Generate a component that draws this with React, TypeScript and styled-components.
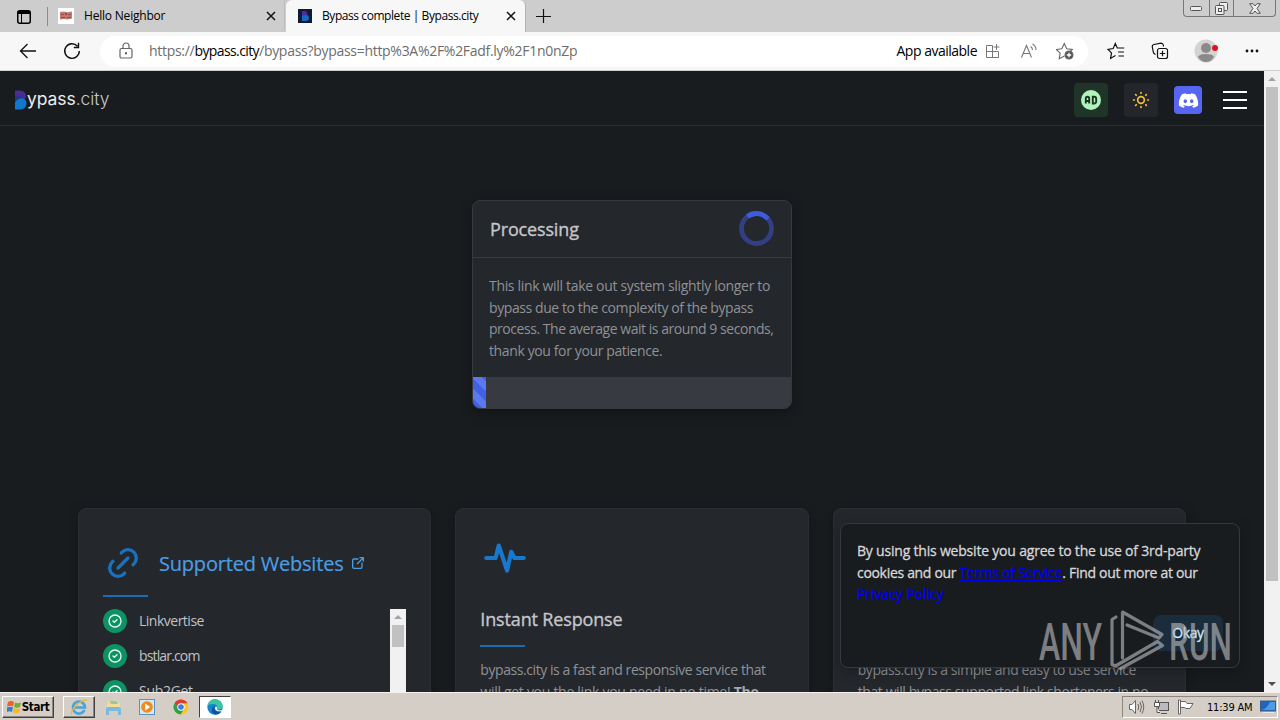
import React from "react";
import styled, { createGlobalStyle } from "styled-components";
import { FaDiscord } from "react-icons/fa";

const Global = createGlobalStyle`
  * { box-sizing: border-box; }
  html, body { margin: 0; padding: 0; }
  body {
    width: 1280px; height: 720px; overflow: hidden;
    font-family: "Open Sans", "Noto Sans", sans-serif;
  }
  svg { display: block; flex: none; }
`;

const Screen = styled.div`
  position: relative;
  width: 1280px; height: 720px;
  display: flex; flex-direction: column;
  overflow: hidden;
`;

/* Browser chrome */
const TabStrip = styled.div`
  height: 32px; flex: none;
  display: flex; align-items: stretch;
  background: #cdcdcd;
  padding-left: 17px;
`;
const TabActions = styled.div`
  width: 31px; display: flex; align-items: center;
  border-right: 1px solid #8c8c8c;
  margin: 7px 0 6px;
`;
const Tab = styled.div<{ $active?: boolean }>`
  width: ${p => (p.$active ? 240 : 237)}px;
  padding: 0 ${p => (p.$active ? 9 : 8)}px 0 ${p => (p.$active ? 12 : 10)}px;
  margin-left: ${p => (p.$active ? 1 : 0)}px;
  display: flex; align-items: center;
  background: ${p => (p.$active ? "#f7f7f7" : "transparent")};
  border-right: 1px solid ${p => (p.$active ? "#b4b4b4" : "#bdbdbd")};
  border-radius: ${p => (p.$active ? "6px 6px 0 0" : "0 0 5px 0")};
`;
const TabTitle = styled.span<{ $ls: number }>`
  flex: 1; margin-left: 10px;
  font-size: 12px; line-height: 16px; color: #000;
  letter-spacing: ${p => p.$ls}px; white-space: nowrap;
`;
const NewTab = styled.div`
  display: flex; align-items: center; padding-left: 9px; flex: 1;
`;
const WindowControls = styled.div`
  width: 93px; height: 17px; margin-right: 4px;
  display: flex;
  border: 1px solid #777; border-top: 0; border-radius: 0 0 4px 4px;
`;
const WindowButton = styled.div<{ $w: number }>`
  width: ${p => p.$w}px; display: flex; align-items: center; justify-content: center;
  & + & { border-left: 1px solid #777; }
`;
const Toolbar = styled.div`
  height: 39px; flex: none;
  display: flex; align-items: center;
  background: #f7f7f7;
  border-bottom: 1px solid #cfcfcf;
  padding-left: 19px;
`;
const NavIcons = styled.div`
  width: 81px; display: flex; gap: 26px;
`;
const AddressBar = styled.div`
  width: 988px; height: 31px; border-radius: 16px; background: #fff;
  display: flex; align-items: center; padding: 0 14px 0 18px;
`;
const Url = styled.span`
  flex: 1; margin-left: 15px;
  font-size: 14px; line-height: 20px; color: #6d6d6d; letter-spacing: -0.29px; white-space: nowrap;
  b { font-weight: 400; color: #000; letter-spacing: -0.6px; }
`;
const AppAvailable = styled.span`
  font-size: 14px; line-height: 20px; letter-spacing: -0.5px; margin-right: 8px; white-space: nowrap;
`;
const AddressIcons = styled.div`
  display: flex; align-items: center; gap: 18px;
`;
const ToolbarIcons = styled.div`
  display: flex; align-items: center; margin-left: 18px;
  svg:nth-child(2) { margin-left: 25px; }
  svg:nth-child(3) { margin-left: 25px; }
  svg:nth-child(4) { margin-left: 26px; }
`;

/* Page */
const Viewport = styled.div`
  height: 621px; flex: none; display: flex; background: #191c1f;
`;
const Page = styled.div`
  width: 1264px; height: 621px; overflow: hidden;
  display: flex; flex-direction: column; align-items: center;
`;
const Header = styled.header`
  width: 100%; height: 55px; flex: none;
  display: flex; align-items: center; justify-content: space-between;
  padding: 4px 17px 0 14px;
  border-bottom: 1px solid #2b2e33;
`;
const Brand = styled.div`
  display: flex; align-items: center; height: 24px;
`;
const BrandName = styled.span`
  font-family: Inter, sans-serif; font-size: 17.5px; line-height: 22px; color: #eceded;
  letter-spacing: -0.07px; margin: -3px 0 0 0;
  i { font-style: normal; font-weight: 300; color: #c9cacc; }
`;
const HeaderActions = styled.div`
  display: flex; align-items: center;
`;
const IconButton = styled.div<{ $bg: string; $size: number; $ml?: number }>`
  width: ${p => p.$size}px; height: ${p => p.$size}px; margin-left: ${p => p.$ml ?? 0}px;
  display: flex; align-items: center; justify-content: center;
  border-radius: 4px; background: ${p => p.$bg}; color: #fff;
`;
const Burger = styled.div`
  width: 24px; height: 18px; margin-left: 21px;
  display: flex; flex-direction: column; justify-content: space-between;
`;
const BurgerLine = styled.span`
  height: 2px; background: #fff;
`;

const StatusCard = styled.section`
  width: 320px; height: 209px; flex: none; margin: 74px 0 99px;
  display: flex; flex-direction: column;
  background: #24272c; border: 1px solid #35383d; border-radius: 8px; overflow: hidden;
  box-shadow: 0 4px 14px rgba(0, 0, 0, 0.3);
`;
const StatusHead = styled.div`
  height: 57px; display: flex; align-items: center; justify-content: space-between;
  padding: 0 17px 1px 16px; border-bottom: 1px solid #393c41;
`;
const StatusTitle = styled.h2`
  margin: 1px 0 0 1px; font-size: 18px; line-height: 26px; font-weight: 500; color: #c4c6ca; letter-spacing: -0.15px;
  -webkit-text-stroke: 0.35px #c4c6ca;
`;
const StatusBody = styled.div`
  flex: 1; padding: 17px 0 0 16px;
`;
const Line = styled.div<{ $ls?: number }>`
  font-size: 14px; line-height: 21.7px; white-space: nowrap;
  letter-spacing: ${p => p.$ls ?? 0}px;
`;
const Muted = styled.div`
  color: #8f9296;
  b { color: #a6a8ab; }
`;
const Progress = styled.div`
  height: 31px; background: #373a40; flex: none;
`;
const ProgressBar = styled.div`
  width: 13px; height: 31px;
  background: repeating-linear-gradient(45deg, #4260e4 0 7px, #5c78ec 7px 14px);
`;

const Features = styled.div`
  width: 1108px; flex: none; display: grid; grid-template-columns: repeat(3, 1fr); gap: 24px;
`;
const Feature = styled.section<{ $top: number }>`
  height: 300px; padding: ${p => p.$top}px 24px 0;
  background: #24272c; border: 1px solid #2a2d32; border-radius: 8px;
  box-shadow: 0 2px 12px rgba(0, 0, 0, 0.25);
`;
const FeatureLink = styled.div`
  display: flex; align-items: center; color: #4dabf7; height: 44px;
`;
const LinkTitle = styled.span`
  font-size: 20px; line-height: 28px; margin: 2px 6px 0 16px; letter-spacing: -0.2px; color: #4a9ee0; white-space: nowrap;
  -webkit-text-stroke: 0.2px #4a9ee0;
`;
const FeatureTitle = styled.h3`
  margin: 22px 0 0; font-size: 18px; line-height: 28px; font-weight: 500; color: #c4c6ca; letter-spacing: -0.15px;
  -webkit-text-stroke: 0.35px #c4c6ca;
`;
const Underline = styled.div<{ $mt: number; $mb: number }>`
  width: 45px; height: 2px; background: #1c6cb4;
  margin: ${p => p.$mt}px 0 ${p => p.$mb}px;
`;
const SiteBox = styled.div`
  display: flex; justify-content: space-between; width: 303px; height: 180px; overflow: hidden;
`;
const SiteList = styled.div`
  display: flex; flex-direction: column; gap: 11.3px;
`;
const Site = styled.div`
  display: flex; align-items: center; gap: 12px; height: 24px;
`;
const SiteName = styled.span<{ $ls: number }>`
  font-size: 14px; line-height: 20px; padding-bottom: 1px; color: #c1c2c5;
  letter-spacing: ${p => p.$ls}px; white-space: nowrap;
`;
const Check = styled.div`
  width: 24px; height: 24px; border-radius: 12px; background: #0d9264;
  display: flex; align-items: center; justify-content: center;
`;
const ScrollTrack = styled.div`
  width: 16px; background: #f1f1f1; display: flex; flex-direction: column; align-items: center;
  flex: none;
`;
const ScrollButton = styled.div`
  width: 16px; height: 16px; flex: none; display: flex; align-items: center; justify-content: center;
`;
const Thumb = styled.div<{ $h: number }>`
  width: 12px; height: ${p => p.$h}px; background: #c1c1c1;
`;
const Spacer = styled.div` flex: 1; `;

/* Overlays */
const CookieDialog = styled.div`
  position: absolute; left: 840px; top: 523px; width: 400px; height: 145px;
  display: flex; flex-direction: column;
  padding: 16px;
  background: #191c1f; border: 1px solid #35383d; border-radius: 8px;
  color: #d6d7d9; -webkit-text-stroke: 0.3px;
  box-shadow: 0 4px 14px rgba(0, 0, 0, 0.25);
`;
const PolicyLink = styled.span`
  color: #0000ee;
  text-decoration: underline solid #0000ee 1px; text-underline-offset: 2px; text-decoration-skip-ink: none;
`;
const Okay = styled.button`
  align-self: flex-end; width: 70px; height: 36px; margin-top: 10px; padding: 0 0 1px;
  border: 0; border-radius: 8px; background: #1b2c3d; color: #d0ebff;
  font-family: inherit; font-size: 14px; letter-spacing: -0.4px;
`;
const Watermark = styled.svg`
  position: absolute; left: 1036px; top: 606px;
`;

/* Taskbar */
const Taskbar = styled.div`
  height: 28px; flex: none; position: relative;
  display: flex; align-items: center;
  background: #d5cec6; border-top: 1px solid #f5f2ee;
  padding: 1px 2px 0 2px;
`;
const TaskButton = styled.div<{ $kind: "raised" | "flat" | "pressed"; $w: number; $ml: number }>`
  width: ${p => p.$w}px; height: 22px; margin-left: ${p => p.$ml}px;
  display: flex; align-items: center; justify-content: center; gap: 1px;
  font: bold 11.5px "DejaVu Sans Condensed", "DejaVu Sans", sans-serif; letter-spacing: -0.4px; color: #000;
  background: ${p => (p.$kind === "pressed" ? "#fff" : "transparent")};
  border: ${p => (p.$kind === "flat" ? "0" : "1px solid")};
  border-color: ${p => (p.$kind === "raised" ? "#fff #404040 #404040 #fff" : "#404040 #fff #fff #404040")};
  box-shadow: ${p => (p.$kind === "raised" ? "inset -1px -1px 0 #8a8680" : "none")};
`;
const Tray = styled.div`
  width: 156px; height: 22px; display: flex; align-items: center;
  border: 1px solid; border-color: #8a8680 #fff #fff #8a8680;
  padding-left: 5px; margin-left: auto;
`;
const Volume = styled.svg``;
const Network = styled.svg` margin-left: 8px; `;
const Flag = styled.svg` margin-left: 7px; `;
const Clock = styled.span`
  width: 46px; margin: 0 7px 0 13px; font: 11px "DejaVu Sans Condensed", "DejaVu Sans", sans-serif; letter-spacing: -0.2px; white-space: nowrap;
`;

type StrokeProps = { size: number; color: string; sw?: number; children: React.ReactNode };
const Stroke = ({ size, color, sw = 2, children }: StrokeProps) => (
  <svg width={size} height={size} viewBox="0 0 24 24" fill="none" stroke={color} strokeWidth={sw} strokeLinecap="round" strokeLinejoin="round">
    {children}
  </svg>
);

const Arrow = ({ up, color }: { up?: boolean; color: string }) => (
  <svg width="8" height="4" viewBox="0 0 8 4"><path d={up ? "M0 4L4 0L8 4z" : "M0 0L4 4L8 0z"} fill={color} /></svg>
);

const CloseX = () => (
  <svg width="10" height="10" viewBox="0 0 10 10"><path d="M1 1l8 8M9 1l-8 8" stroke="#111" strokeWidth="1.5" /></svg>
);

const BrandMark = () => (
  <svg width="13" height="20" viewBox="0 0 13 20">
    <path d="M1 .5h5.500q5 .5 5.500 5.500 0 2-1 3L1 7.500z" fill="#4a2c93" />
    <path d="M1 5.500l8 1.500 2 2.500L1 15z" fill="#26348c" />
    <path d="M1 12.500Q4 8.300 8.500 8.300q4 1.200 4 5.200-.5 5.500-6 6H1z" fill="#0f78cf" />
  </svg>
);

const sites: [string, number][] = [["Linkvertise", -0.5], ["bstlar.com", -0.85], ["Sub2Get", -0.3], ["Sub2Unlock", -0.3]];

const BrowserTabs = () => (
  <TabStrip>
    <TabActions>
      <svg width="14" height="14" viewBox="0 0 14 14" fill="none" stroke="#000">
        <rect x=".75" y=".75" width="12.5" height="12.5" rx="2" strokeWidth="1.5" />
        <path d="M1 2.5h12" strokeWidth="3" /><path d="M4.5 3v10" />
      </svg>
    </TabActions>
    <Tab>
      <svg width="16" height="16" viewBox="0 0 16 16">
        <rect width="16" height="16" fill="#fff" />
        <path d="M2 4l4-.5 3 .8 5-.7v7l-5 1-3-.6-4 .5z" fill="#c07a70" />
        <path d="M3 6h3v1H3zM7 5h2v2H7zM10 6h3v1h-3zM3 9h4v1H3zM9 9h4v1H9z" fill="#8f4b48" />
      </svg>
      <TabTitle $ls={-0.2}>Hello Neighbor</TabTitle>
      <CloseX />
    </Tab>
    <Tab $active>
      <svg width="14" height="14" viewBox="0 0 14 14">
        <rect width="14" height="14" fill="#101a33" />
        <path d="M4 2h3a3 3 0 0 1 2 4.500L4 7z" fill="#4d2f9c" />
        <path d="M4 6.500L8 6a3 3 0 0 1 0 6H4z" fill="#1767c4" />
      </svg>
      <TabTitle $ls={-0.43}>Bypass complete | Bypass.city</TabTitle>
      <CloseX />
    </Tab>
    <NewTab>
      <svg width="16" height="16" viewBox="0 0 16 16"><path d="M8.500 1v14M1 8.500h15" stroke="#111" strokeWidth="1.2" /></svg>
    </NewTab>
    <WindowControls>
      <WindowButton $w={25}>
        <svg width="12" height="5" viewBox="0 0 12 5"><rect x=".5" y=".5" width="11" height="4" rx="1" fill="#eee" stroke="#555" /></svg>
      </WindowButton>
      <WindowButton $w={25}>
        <svg width="13" height="13" viewBox="0 0 13 13" fill="#eee" stroke="#555">
          <rect x="4.500" y=".5" width="8" height="8" rx="1" /><rect x=".5" y="3.500" width="8.500" height="9" rx="1" /><rect x="3.500" y="6.500" width="3" height="3" />
        </svg>
      </WindowButton>
      <WindowButton $w={42}>
        <svg width="12" height="11" viewBox="0 0 12 11">
          <path d="M.7 .7h3.300L6 3l2-2.300h3.300L8 5.500l3.300 4.800H8L6 8l-2 2.300H.7L4 5.500z" fill="#eee" stroke="#555" />
        </svg>
      </WindowButton>
    </WindowControls>
  </TabStrip>
);

const BrowserToolbar = () => (
  <Toolbar>
    <NavIcons>
      <svg width="18" height="18" viewBox="0 0 18 18" fill="none" stroke="#111" strokeWidth="1.3"><path d="M17 9H1.500M8.500 2l-7 7 7 7" /></svg>
      <svg width="18" height="18" viewBox="0 0 18 18" fill="none" stroke="#111" strokeWidth="1.400"><path d="M16.300 9A7.300 7.300 0 1 1 14.500 4.200M15.500 .8v4.700h-4.700" /></svg>
    </NavIcons>
    <AddressBar>
      <svg width="16" height="18" viewBox="0 0 16 18" fill="none" stroke="#666" strokeWidth="1.200">
        <rect x="2" y="6.500" width="12" height="9.500" rx="1.500" /><path d="M5 6.500V4a3 3 0 0 1 6 0v2.500" /><circle cx="8" cy="11.300" r=".6" fill="#666" />
      </svg>
      <Url>https://<b>bypass.city</b>/bypass?bypass=http%3A%2F%2Fadf.ly%2F1n0nZp</Url>
      <AppAvailable>App available</AppAvailable>
      <AddressIcons>
        <svg width="16" height="16" viewBox="0 0 16 16" fill="none" stroke="#777">
          <path d="M7.500 2.500h-6v12h12v-5M1.500 8.500h12v6M7.500 2.500v12M11.500 1v6M8.500 4h6" />
        </svg>
        <svg width="19" height="16" viewBox="-1 0 19 16" fill="none" stroke="#777" strokeWidth="1.100">
          <path d="M1.500 14.500L6.500 2.500l5 12M3.200 10.500h6.600M10.500 3.500q2 1 2 3.500M12.500 1q3.500 2 3.500 6" />
        </svg>
        <svg width="18" height="18" viewBox="1 0 18 18" fill="none" stroke="#666" strokeWidth="1.100">
          <path d="M9.500 14l-5.300 2.700 1-5.500L1.300 7.500l5.500-.8L9.300 1.500l2.400 5.200 5.600.8-2 2" />
          <circle cx="14" cy="13" r="4" fill="#555" /><path d="M14 10.800v4.400M11.800 13h4.400" stroke="#fff" strokeWidth="1.300" />
        </svg>
      </AddressIcons>
    </AddressBar>
    <ToolbarIcons>
      <svg width="20" height="18" viewBox="0 0 20 18" fill="none" stroke="#111" strokeWidth="1.200">
        <path d="M9.500 13.500l-4.900 2.900.9-5.500L2 7.300l5.200-.8L9.300 1.500l2 4.500h7M12 10h6M12.500 14h5.500" />
      </svg>
      <svg width="18" height="18" viewBox="0 0 18 18" fill="none" stroke="#111" strokeWidth="1.200">
        <rect x="6.500" y="6.500" width="10" height="10" rx="2" /><path d="M11.500 8.800v5.400M8.800 11.500h5.400" />
        <path d="M4.500 12.500L2.500 11 1.300 4.800Q1 3 3 2.500l7-1.300q2 0 2.300 2l.2 1.300" />
      </svg>
      <svg width="24" height="24" viewBox="0 0 24 24">
        <circle cx="12" cy="12" r="11.500" fill="#d5d3d1" /><circle cx="12" cy="9" r="5" fill="#8b8989" />
        <path d="M4 18q1-3 8-3t8 3q-3 5-8 5t-8-5z" fill="#8b8989" /><circle cx="21" cy="9" r="3" fill="#e01020" />
      </svg>
      <svg width="16" height="16" viewBox="0 0 16 16" fill="#111"><circle cx="3" cy="8" r="1.400" /><circle cx="8" cy="8" r="1.400" /><circle cx="13" cy="8" r="1.400" /></svg>
    </ToolbarIcons>
  </Toolbar>
);

const SiteHeader = () => (
  <Header>
    <Brand>
      <BrandMark />
      <BrandName>ypass<i>.city</i></BrandName>
    </Brand>
    <HeaderActions>
      <IconButton $bg="#1f3527" $size={34}>
        <svg width="24" height="24" viewBox="0 0 24 24">
          <circle cx="12" cy="12" r="10" fill="#b2f2bb" />
          <path d="M6.800 15.500v-5a1.700 1.700 0 0 1 3.400 0v5M6.800 13h3.400M13.800 8.800v6.700h1.400a2 2 0 0 0 2-2v-2.700a2 2 0 0 0-2-2z" fill="none" stroke="#1b3524" strokeWidth="1.900" />
        </svg>
      </IconButton>
      <IconButton $bg="#25262b" $size={34} $ml={16}>
        <Stroke size={20} color="#f2c23c">
          <path d="M12 12m-4 0a4 4 0 1 0 8 0a4 4 0 1 0 -8 0M3 12h1M12 3v1M20 12h1M12 20v1M5.600 5.600l.7.7M18.400 5.600l-.7.7M17.700 17.700l.7.7M6.300 17.700l-.7.7" />
        </Stroke>
      </IconButton>
      <IconButton $bg="#5865f2" $size={28} $ml={16}><FaDiscord size={21} /></IconButton>
      <Burger><BurgerLine /><BurgerLine /><BurgerLine /></Burger>
    </HeaderActions>
  </Header>
);

const ProcessingCard = () => (
  <StatusCard>
    <StatusHead>
      <StatusTitle>Processing</StatusTitle>
      <svg width="36" height="36" viewBox="0 0 36 36" fill="none" strokeWidth="4.800">
        <circle cx="18.500" cy="17.500" r="15" stroke="#323f82" />
        <path d="M9.500 5.500A15 15 0 0 1 30 7.900" stroke="#3f5bdc" />
      </svg>
    </StatusHead>
    <StatusBody>
      <Muted>
        <Line $ls={-0.32}>This link will take out system slightly longer to</Line>
        <Line $ls={-0.41}>bypass due to the complexity of the bypass</Line>
        <Line $ls={-0.46}>process. The average wait is around 9 seconds,</Line>
        <Line $ls={-0.38}>thank you for your patience.</Line>
      </Muted>
    </StatusBody>
    <Progress><ProgressBar /></Progress>
  </StatusCard>
);

const FeatureCards = () => (
  <Features>
    <Feature $top={32}>
      <FeatureLink>
        <Stroke size={40} color="#1971c2">
          <path d="M9 15l6-6M11 6l.463-.536a5 5 0 0 1 7.071 7.072l-.534.464M13 18l-.397.534a5.068 5.068 0 0 1-7.127 0a4.972 4.972 0 0 1 0-7.071l.524-.463" />
        </Stroke>
        <LinkTitle>Supported Websites</LinkTitle>
        <Stroke size={16} color="#4a9ee0">
          <path d="M12 6h-6a2 2 0 0 0-2 2v10a2 2 0 0 0 2 2h10a2 2 0 0 0 2-2v-6M11 13l9-9M15 4h5v5" />
        </Stroke>
      </FeatureLink>
      <Underline $mt={10} $mb={12} />
      <SiteBox>
        <SiteList>
          {sites.map(([name, ls]) => (
            <Site key={name}>
              <Check>
                <Stroke size={16} color="#e6fcf5"><circle cx="12" cy="12" r="9" /><path d="M9 12l2 2l4-4" /></Stroke>
              </Check>
              <SiteName $ls={ls}>{name}</SiteName>
            </Site>
          ))}
        </SiteList>
        <ScrollTrack>
          <ScrollButton><Arrow up color="#a3a3a3" /></ScrollButton>
          <Thumb $h={22} />
        </ScrollTrack>
      </SiteBox>
    </Feature>
    <Feature $top={24}>
      <Stroke size={50} color="#1878cc"><path d="M3 12h4.500l1.500-6l4 12l2-9l1.500 3h4.500" /></Stroke>
      <FeatureTitle>Instant Response</FeatureTitle>
      <Underline $mt={12} $mb={12} />
      <Muted>
        <Line $ls={-0.43}>bypass.city is a fast and responsive service that</Line>
        <Line $ls={-0.29}>will get you the link you need in no time! <b>The</b></Line>
      </Muted>
    </Feature>
    <Feature $top={24}>
      <Stroke size={50} color="#1878cc"><path d="M5 12l5 5l10-10" /></Stroke>
      <FeatureTitle>Easy to use</FeatureTitle>
      <Underline $mt={12} $mb={12} />
      <Muted>
        <Line $ls={-0.41}>bypass.city is a simple and easy to use service</Line>
        <Line $ls={-0.4}>that will bypass supported link shorteners in no</Line>
      </Muted>
    </Feature>
  </Features>
);

const CookieNotice = () => (
  <CookieDialog>
    <Line $ls={-0.2}>By using this website you agree to the use of 3rd-party</Line>
    <Line $ls={-0.31}>cookies and our <PolicyLink>Terms of Service</PolicyLink>. Find out more at our</Line>
    <Line $ls={-0.05}><PolicyLink>Privacy Policy</PolicyLink></Line>
    <Okay>Okay</Okay>
  </CookieDialog>
);

const AnyRun = () => (
  <Watermark width="200" height="68" viewBox="0 0 200 68" opacity="0.64">
    <g fill="#b4b6b8" fontFamily="Roboto, sans-serif" fontSize="52" fontWeight="500">
      <text x="3" y="53.500" textLength="63" lengthAdjust="spacingAndGlyphs">ANY</text>
      <text x="133" y="53.500" textLength="63" lengthAdjust="spacingAndGlyphs">RUN</text>
    </g>
    <g fill="none" stroke="#b4b6b8" strokeWidth="3.200" strokeLinejoin="round" strokeLinecap="round">
      <path d="M80 11l-4 2.500v45l3.500 1.500L121.500 35.500l5 4L84.500 62.500" />
      <path d="M86.500 52V6L126 28.500l-3 3.500L91 19" />
    </g>
  </Watermark>
);

const WindowsTaskbar = () => (
  <Taskbar>
    <TaskButton $kind="raised" $w={52} $ml={0}>
      <svg width="14" height="14" viewBox="0 0 14 14">
        <path d="M1 2q3-2 6 0L6 6.500q-3-1.500-6 0z" fill="#e8622a" /><path d="M8 2.500q3 1.500 6 0L13 7q-3 1.500-6 0z" fill="#6cae3a" />
        <path d="M0 7.500q3-1.500 6 0L5 12q-3-1.500-5 0z" fill="#3a7cc8" /><path d="M7 8q3 1.500 6 0l-1 4.500q-3 1.500-6 0z" fill="#f2b92c" />
      </svg>
      Start
    </TaskButton>
    <TaskButton $kind="raised" $w={32} $ml={9}>
      <svg width="18" height="18" viewBox="0 0 18 18" fill="none">
        <path d="M14.500 12A6 6 0 1 1 15 9.500H5" stroke="#4aa3dc" strokeWidth="2.600" /><path d="M2 16.500C-1 13 12 0 17 2.500" stroke="#e8b93a" strokeWidth="1.400" />
      </svg>
    </TaskButton>
    <TaskButton $kind="flat" $w={32} $ml={2}>
      <svg width="17" height="17" viewBox="0 0 17 17">
        <path d="M2 2h6l1 2h6v8H2z" fill="#edd98a" /><path d="M5 2h6l2 3H6z" fill="#9cc98c" />
        <path d="M2 5h13v3H2z" fill="#f0de98" />
        <path d="M1 10q0-2 2-2h11q2 0 2 2v6h-3v-4H4v4H1z" fill="#7db9dc" />
      </svg>
    </TaskButton>
    <TaskButton $kind="flat" $w={32} $ml={2}>
      <svg width="16" height="16" viewBox="0 0 16 16">
        <rect x=".5" y=".5" width="15" height="15" fill="#d6e6f2" stroke="#5a94c4" /><circle cx="8" cy="8" r="5.800" fill="#f08a1d" /><path d="M6.200 4.500l5 3.500-5 3.500z" fill="#fff" />
      </svg>
    </TaskButton>
    <TaskButton $kind="flat" $w={32} $ml={2}>
      <svg width="16" height="16" viewBox="0 0 16 16">
        <circle cx="8" cy="8" r="7.500" fill="#f9c623" /><path d="M1.500 4.250A7.500 7.500 0 0 1 14.500 4.250L8 4.500 5 9.500z" fill="#df3b30" />
        <path d="M1.500 4.250A7.500 7.500 0 0 0 7.500 15.500L11 10 5 9.500z" fill="#2b9f4b" /><circle cx="8" cy="8" r="3.700" fill="#fff" /><circle cx="8" cy="8" r="2.800" fill="#3c7be8" />
      </svg>
    </TaskButton>
    <TaskButton $kind="pressed" $w={32} $ml={2}>
      <svg width="16" height="16" viewBox="0 0 16 16">
        <circle cx="8" cy="8" r="7.700" fill="#1583cf" /><path d="M.5 7C1.500 2 5 .3 8 .3c5 0 8 4 7.700 7C15.500 10 12 11 10 10q1-5-4-5-4 0-5.500 2z" fill="#3cc5a0" />
        <path d="M9 6.500q-3 2-1 5 3 2 6.500 1Q12 16 8 15.500 4 14 5 10q1-3 4-3.500z" fill="#11529c" /><path d="M8.500 7.500q2 0 1.500 3 2 1.500 5 .5l-.6 1.200Q9 13 8 9.500z" fill="#fff" />
      </svg>
    </TaskButton>
    <Tray>
      <Volume width="17" height="16" viewBox="0 0 17 16" fill="#fff" stroke="#666">
        <path d="M1.500 5.500h2.500l3.500-4v13l-3.500-4H1.500z" /><path d="M10 5q1.500 3 0 6M12 3q3 5 0 10M14 1.500q3.500 6.500 0 13" fill="none" />
      </Volume>
      <Network width="17" height="16" viewBox="0 0 17 16" fill="#fff" stroke="#555">
        <rect x="5.500" y="3.500" width="10" height="8" fill="#bbb" /><path d="M8 14.500h6M1.500 3.500h5v4h-5zM2.500 1v2M5.500 1v2M4 7.500v6h3" />
      </Network>
      <Flag width="17" height="16" viewBox="0 0 17 16" fill="#fff" stroke="#666">
        <path d="M1.500 1v14h2V1zM3.500 2.500h5l1.500 2h6l-3 5H9l-1.500-1h-4z" />
      </Flag>
      <Clock>11:39 AM</Clock>
      <svg width="16" height="14" viewBox="0 0 16 14">
        <rect x=".5" y="1" width="15" height="10" fill="#1f66c0" stroke="#3e5c80" /><path d="M1 10q6-1 9-8h5v8z" fill="#4e9be4" /><path d="M3 12.500h11" stroke="#e8e8e8" />
      </svg>
    </Tray>
  </Taskbar>
);

export default function App() {
  return (
    <>
      <Global />
      <Screen>
        <BrowserTabs />
        <BrowserToolbar />
        <Viewport>
          <Page>
            <SiteHeader />
            <ProcessingCard />
            <FeatureCards />
          </Page>
          <ScrollTrack>
            <ScrollButton><Arrow up color="#a3a3a3" /></ScrollButton>
            <Thumb $h={494} />
            <Spacer />
            <ScrollButton><Arrow color="#505050" /></ScrollButton>
          </ScrollTrack>
        </Viewport>
        <WindowsTaskbar />
        <CookieNotice />
        <AnyRun />
      </Screen>
    </>
  );
}
